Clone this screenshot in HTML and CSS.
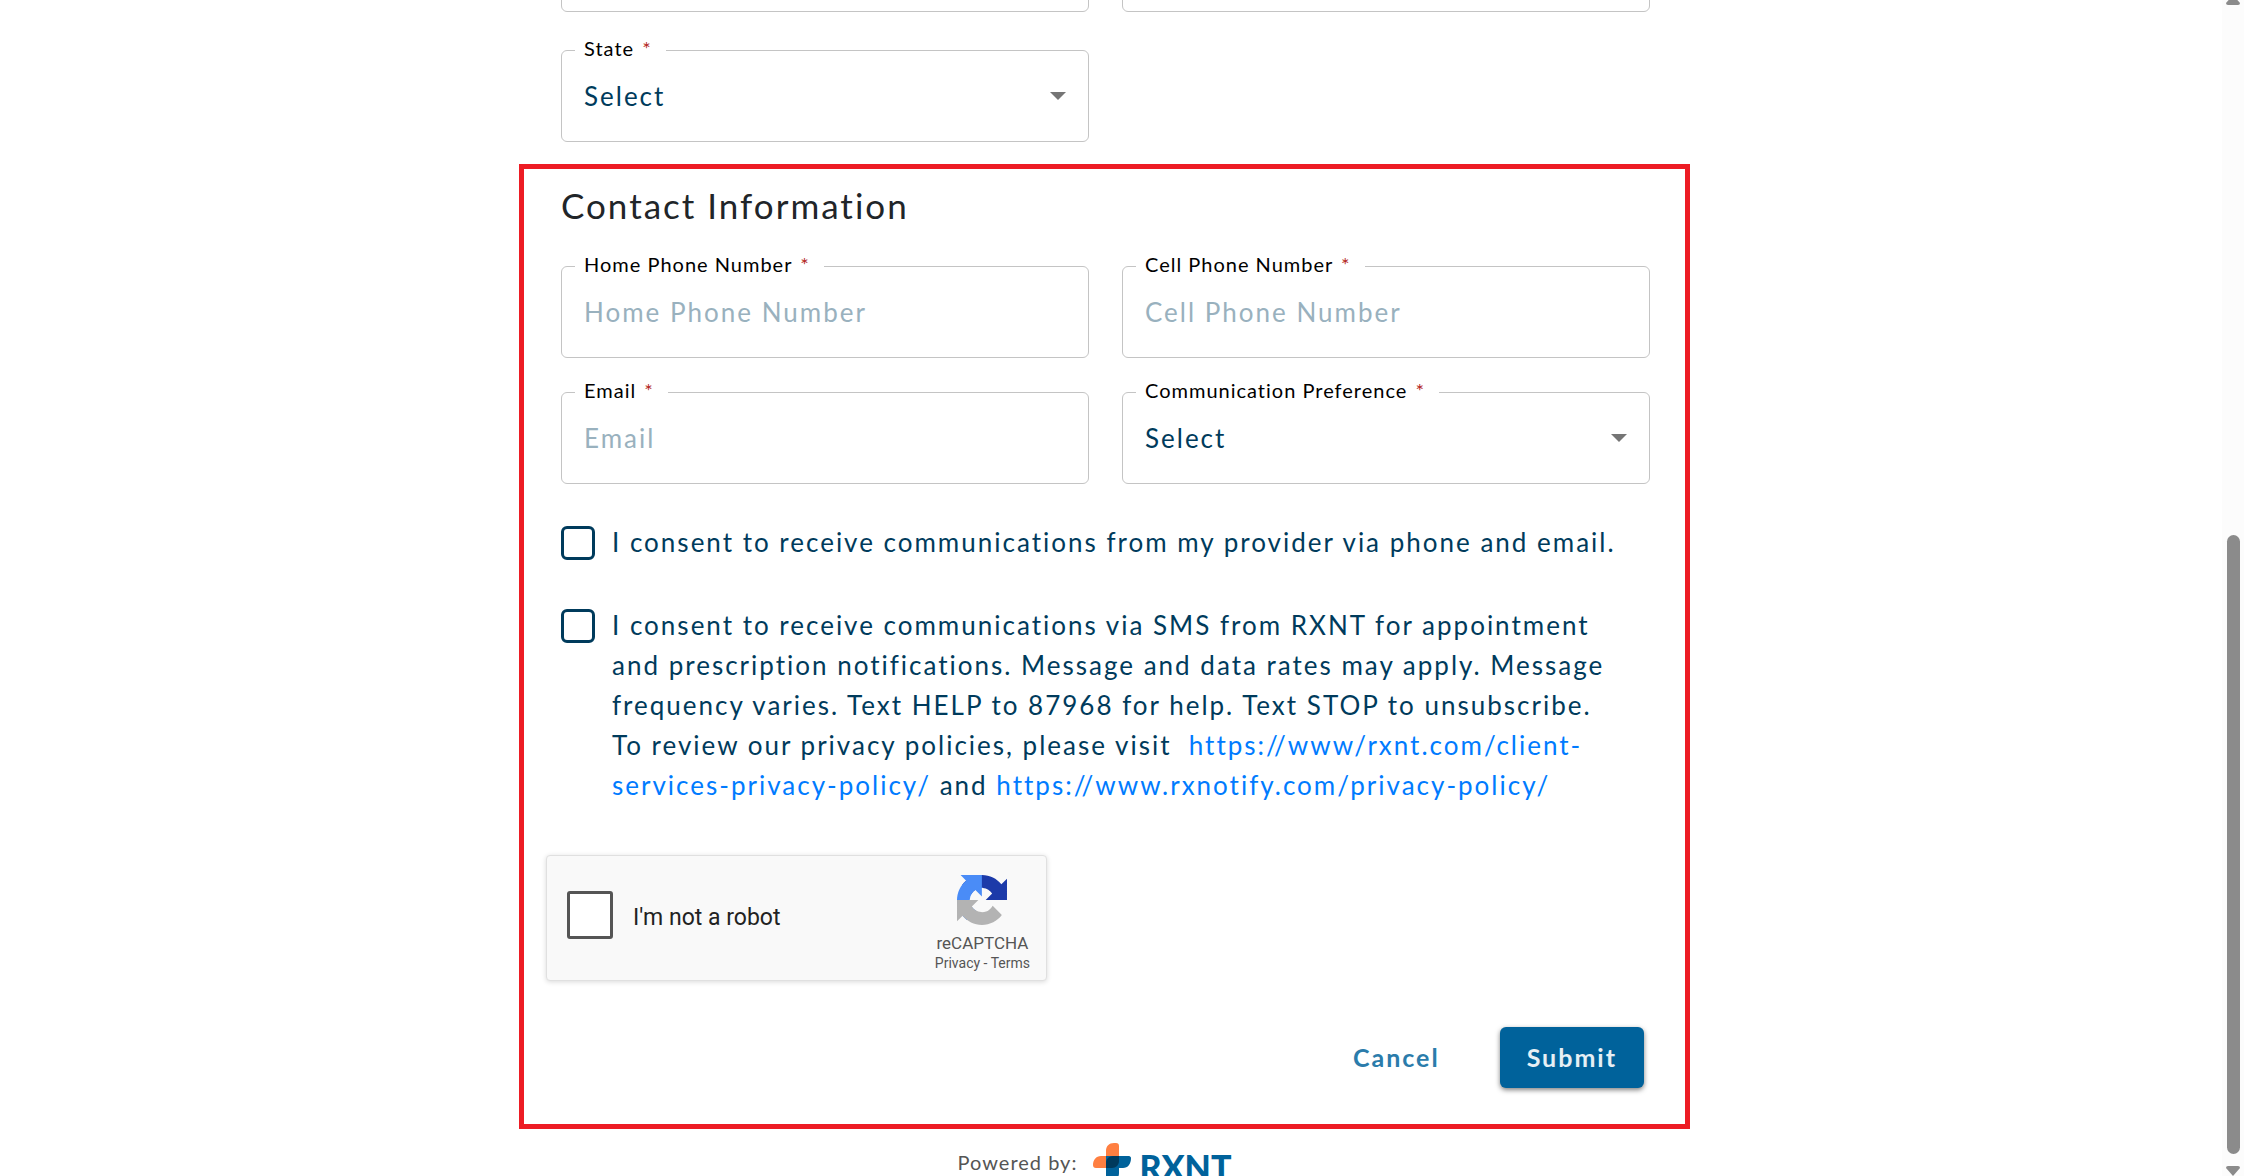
FILE: index.html
```html
<!DOCTYPE html>
<html lang="en">
<head>
    <meta charset="UTF-8">
    <meta name="viewport" content="width=device-width, initial-scale=1.0">
    <title>Patient Registration</title>
    <link rel="stylesheet" href="styles.css">
</head>
<body>
    <div class="page">
        <form class="form">
            <div class="address">
                <div class="grid">
                    <div class="field">
                        <input type="text" id="city" aria-label="City">
                    </div>
                    <div class="field">
                        <input type="text" id="zip" aria-label="Zip">
                    </div>
                </div>
                <div class="grid">
                    <div class="field">
                        <label for="state">State <span class="req">*</span></label>
                        <select id="state">
                            <option>Select</option>
                        </select>
                        <svg class="arrow" viewBox="0 0 16 8"><path d="M0 0h16L8 8z"/></svg>
                    </div>
                </div>
            </div>

            <section class="contact">
                <h2>Contact Information</h2>
                <div class="grid">
                    <div class="field">
                        <label for="homePhone">Home Phone Number <span class="req">*</span></label>
                        <input type="tel" id="homePhone" placeholder="Home Phone Number">
                    </div>
                    <div class="field">
                        <label for="cellPhone">Cell Phone Number <span class="req">*</span></label>
                        <input type="tel" id="cellPhone" placeholder="Cell Phone Number">
                    </div>
                    <div class="field">
                        <label for="email">Email <span class="req">*</span></label>
                        <input type="email" id="email" placeholder="Email">
                    </div>
                    <div class="field">
                        <label for="preference">Communication Preference <span class="req">*</span></label>
                        <select id="preference">
                            <option>Select</option>
                        </select>
                        <svg class="arrow" viewBox="0 0 16 8"><path d="M0 0h16L8 8z"/></svg>
                    </div>
                </div>

                <div class="consents">
                    <div class="consent">
                        <input type="checkbox" id="consentEmail">
                        <label for="consentEmail">I consent to receive communications from my provider via phone and email.</label>
                    </div>
                    <div class="consent">
                        <input type="checkbox" id="consentSms">
                        <label for="consentSms">I consent to receive communications via SMS from RXNT for appointment<br>
                            and prescription notifications. Message and data rates may apply. Message<br>
                            frequency varies. Text HELP to 87968 for help. Text STOP to unsubscribe.<br>
                            To review our privacy policies, please visit&nbsp; <a href="#">https://www/rxnt.com/client-<br>services-privacy-policy/</a> and <a href="#">https://www.rxnotify.com/privacy-policy/</a></label>
                    </div>
                </div>

                <div class="recaptcha">
                    <input type="checkbox" id="robot">
                    <label for="robot">I'm not a robot</label>
                    <div class="recaptcha-brand">
                        <svg viewBox="0 0 64 64">
                            <path fill="#1c3aa9" d="M64 31.955l-.033-1.37V4.687l-7.16 7.16C50.948 4.674 42.033.093 32.05.093c-10.4 0-19.622 4.96-25.458 12.64l11.736 11.86a15.55 15.55 0 0 1 4.754-5.334c2.05-1.6 4.952-2.906 8.968-2.906.485 0 .86.057 1.135.163 4.976.393 9.288 3.14 11.828 7.124l-8.307 8.307L64 31.953"/>
                            <path fill="#4a8cf7" d="M31.862.094l-1.37.033H4.594l7.16 7.16C4.58 13.147 0 22.06 0 32.046c0 10.4 4.96 19.622 12.64 25.458L24.5 45.768a15.55 15.55 0 0 1-5.334-4.754c-1.6-2.05-2.906-4.952-2.906-8.968 0-.485.057-.86.163-1.135.393-4.976 3.14-9.288 7.124-11.828l8.307 8.307L31.86.095"/>
                            <path fill="#b3b3b3" d="M.001 32.045l.033 1.37v25.898l7.16-7.16c5.86 7.173 14.774 11.754 24.76 11.754 10.4 0 19.622-4.96 25.458-12.64l-11.736-11.86a15.55 15.55 0 0 1-4.754 5.334c-2.05 1.6-4.952 2.906-8.968 2.906-.485 0-.86-.057-1.135-.163-4.976-.393-9.288-3.14-11.828-7.124l8.307-8.307c-10.522.04-22.4.066-27.295-.005"/>
                        </svg>
                        <span class="recaptcha-name">reCAPTCHA</span>
                        <span class="recaptcha-links"><a href="#">Privacy</a> - <a href="#">Terms</a></span>
                    </div>
                </div>

                <div class="actions">
                    <button type="button" class="cancel">Cancel</button>
                    <button type="submit" class="submit">Submit</button>
                </div>
            </section>
        </form>

        <footer>
            <span>Powered by:</span>
            <svg class="plus" viewBox="0 0 38 38">
                <path fill="#ff7f41" d="M13 25H3c-2 0-3-1-3-3 0-5 3-9 8-9h5V8c0-5 3-8 8-8h2c2 0 3 1 3 3v22z"/>
                <path fill="#00629b" d="M13 13h23c1 0 2 1 2 2 0 6-3 10-8 10h-4v5c0 5-3 8-8 8h-3c-1 0-2-1-2-2z"/>
                <path fill="#003a5d" d="M13 25v-5c0-4 3-7 7-7h6v5c0 4-3 7-7 7z"/>
            </svg>
            <span class="brand">RXNT</span>
        </footer>
    </div>

    <div class="scrollbar">
        <svg class="scroll-up" viewBox="0 0 14 10"><path d="M7 0l7 8q0 2-2 2H2q-2 0-2-2z"/></svg>
        <div class="thumb"></div>
        <svg class="scroll-down" viewBox="0 0 14 10"><path d="M7 10l7-8q0-2-2-2H2Q0 0 0 2z"/></svg>
    </div>
</body>
</html>
```
FILE: styles.css
```css
* {
    box-sizing: border-box;
}
body {
    margin: 0;
    height: 100vh;
    display: flex;
    overflow: hidden;
    background-color: #fff;
    color: #003b5c;
    font-family: Lato, "Liberation Sans", sans-serif;
    font-size: 26px;
    line-height: 40px;
    letter-spacing: 2px;
}
a {
    color: #007bff;
    text-decoration: none;
}
.page {
    flex: 1;
    padding-right: 13px;
}
.form {
    max-width: 1171px;
    margin: 0 auto;
}

/* fields */
.address {
    padding: 0 40px 22px 42px;
    margin-top: -80px;
    display: grid;
    gap: 38px;
}
.grid {
    display: grid;
    grid-template-columns: 1fr 1fr;
    gap: 34px 33px;
}
.field {
    position: relative;
}
.field label {
    position: absolute;
    top: -16px;
    left: 14px;
    padding: 0 14px 0 9px;
    background-color: #fff;
    color: #000;
    font-size: 20px;
    line-height: 28px;
    letter-spacing: 1px;
}
.req {
    margin-left: 2px;
    color: #b3261e;
}
.field input,
.field select {
    display: block;
    width: 100%;
    height: 92px;
    padding: 0 22px;
    border: 1px solid #c4c4c4;
    border-radius: 6px;
    background-color: #fff;
    color: #003b5c;
    font: inherit;
    letter-spacing: inherit;
    appearance: none;
}
.field input::placeholder {
    color: #99b1be;
    opacity: 1;
}
.arrow {
    position: absolute;
    right: 23px;
    top: 42px;
    width: 16px;
    height: 8px;
    fill: #757575;
    pointer-events: none;
}

/* contact section */
.contact {
    padding: 13px 35px 36px 37px;
    border: 5px solid #ed1c24;
}
h2 {
    margin: 0 0 38px;
    color: #212529;
    font-size: 35px;
    font-weight: 400;
    line-height: 46px;
}
.consents {
    margin-top: 38px;
    display: grid;
    gap: 43px;
}
.consent {
    display: flex;
    align-items: flex-start;
    gap: 17px;
}
.consent input {
    flex: none;
    width: 34px;
    height: 34px;
    margin: 4px 0 0;
    border: 3px solid #003b5c;
    border-radius: 6px;
    background-color: #fff;
    appearance: none;
}

/* recaptcha */
.recaptcha {
    display: flex;
    align-items: center;
    width: 501px;
    height: 126px;
    margin: 50px 0 0 -15px;
    padding: 0 16px 0 20px;
    border: 1px solid #e0e0e0;
    border-radius: 4px;
    background-color: #f9f9f9;
    box-shadow: 0 1px 5px rgba(0, 0, 0, 0.15);
    color: #222;
    font-family: Roboto, "Liberation Sans", sans-serif;
    font-size: 23px;
    letter-spacing: normal;
}
.recaptcha input {
    width: 46px;
    height: 48px;
    margin: 0 20px 6px 0;
    border: 3px solid #555;
    border-radius: 3px;
    background-color: #fff;
    appearance: none;
}
.recaptcha-brand {
    display: flex;
    flex-direction: column;
    align-items: center;
    margin-left: auto;
    padding-top: 12px;
    color: #555;
}
.recaptcha-brand svg {
    width: 50px;
    height: 50px;
    margin-bottom: 8px;
}
.recaptcha-name {
    font-size: 17px;
    line-height: 20px;
}
.recaptcha-links {
    font-size: 14px;
    line-height: 20px;
}
.recaptcha-links a {
    color: inherit;
}

/* buttons */
.actions {
    display: flex;
    justify-content: flex-end;
    gap: 33px;
    margin: 46px 6px 0 0;
}
.actions button {
    height: 61px;
    padding: 0 27px 2px;
    border: none;
    border-radius: 6px;
    font: inherit;
    font-size: 25px;
    font-weight: 700;
    letter-spacing: 2px;
    cursor: pointer;
}
.cancel {
    background-color: transparent;
    color: #2b7cab;
}
.submit {
    background-color: #00629b;
    color: #e6eff5;
    box-shadow: 0 2px 5px rgba(0, 0, 0, 0.5);
}

/* footer */
footer {
    display: flex;
    justify-content: center;
    align-items: flex-start;
    padding: 13px 20px 0 0;
    color: #555;
    font-size: 20px;
    letter-spacing: 1px;
}
.plus {
    width: 38px;
    height: 38px;
    margin: 1px 8px 0 16px;
}
.brand {
    color: #00629b;
    font-size: 34px;
    font-weight: 900;
    line-height: 50px;
    letter-spacing: normal;
}

/* scrollbar */
.scrollbar {
    width: 22px;
    display: flex;
    flex-direction: column;
    align-items: center;
    background-color: #fcfcfc;
}
.scrollbar svg {
    flex: none;
    width: 14px;
    height: 10px;
    fill: #8b8b8b;
}
.scroll-up {
    margin-top: -5px;
}
.thumb {
    width: 13px;
    height: 619px;
    margin: auto 0 12px;
    border-radius: 7px;
    background-color: #8b8b8b;
}
```
